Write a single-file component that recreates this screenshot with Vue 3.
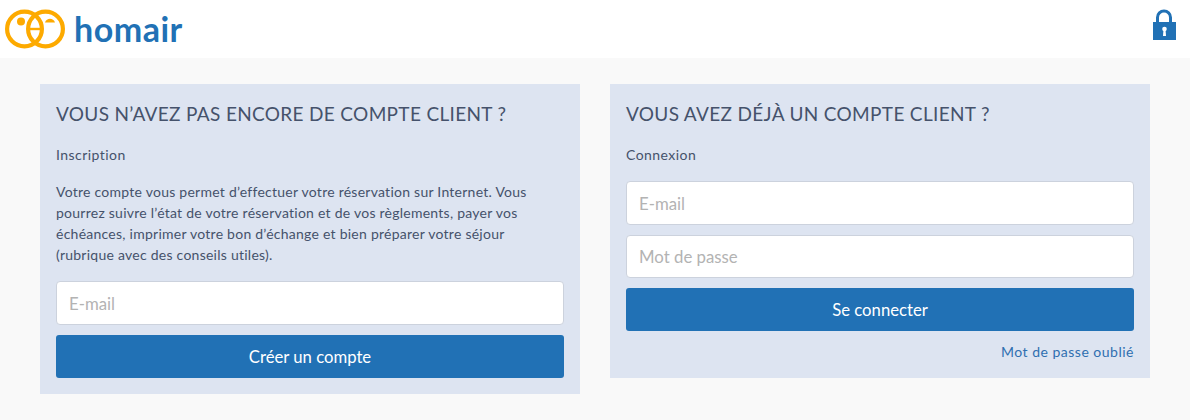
<template>
  <div class="page">
    <header class="top">
      <div class="logo">
        <svg width="60" height="40" viewBox="0 0 60 40">
          <g fill="none" stroke="#fdaa00" stroke-width="4.200">
            <circle cx="19.500" cy="20" r="17.400" />
            <circle cx="40.500" cy="20" r="17.400" />
            <path d="M23 20h14" stroke-width="2.400" />
          </g>
          <circle cx="16" cy="12.500" r="4" fill="#fdaa00" />
          <path d="M40 13.500c1.500-5 8.500-5 10 0z" fill="#fdaa00" />
        </svg>
        <span class="brand">homair</span>
      </div>
      <svg class="lock" width="24" height="32" viewBox="0 0 24 32">
        <path d="M5.500 15V9.500a6.500 6.500 0 0 1 13 0V15" fill="none" stroke="#2171b5" stroke-width="3" />
        <path d="M1 14h23v18H1z" fill="#2171b5" />
        <circle cx="12.500" cy="21" r="2.300" fill="#fff" />
        <path d="M11.500 21h2l.5 7h-3z" fill="#fff" />
      </svg>
    </header>
    <main class="cols">
      <section class="card">
        <h2>VOUS N’AVEZ PAS ENCORE DE COMPTE CLIENT ?</h2>
        <p class="sub">Inscription</p>
        <p class="desc">
          Votre compte vous permet d’effectuer votre réservation sur Internet. Vous<br />
          pourrez suivre l’état de votre réservation et de vos règlements, payer vos<br />
          échéances, imprimer votre bon d’échange et bien préparer votre séjour<br />
          (rubrique avec des conseils utiles).
        </p>
        <input type="text" placeholder="E-mail" />
        <button>Créer un compte</button>
      </section>
      <section class="card">
        <h2>VOUS AVEZ DÉJÀ UN COMPTE CLIENT ?</h2>
        <p class="sub">Connexion</p>
        <input type="text" placeholder="E-mail" />
        <input class="short" type="password" placeholder="Mot de passe" />
        <button>Se connecter</button>
        <a class="forgot" href="#">Mot de passe oublié</a>
      </section>
    </main>
  </div>
</template>

<script setup>
</script>

<style>
html,
body {
  margin: 0;
  background: #f9f9f9;
}
</style>

<style scoped>
.page {
  height: 420px;
  overflow: hidden;
  font-family: Lato, "Open Sans", sans-serif;
  color: #45526b;
}
.top {
  height: 58px;
  background: #fff;
  display: flex;
  justify-content: space-between;
  padding: 0 14px 0 5px;
}
.logo {
  display: flex;
  align-items: center;
  gap: 9px;
  height: 58px;
}
.brand {
  font-size: 34px;
  font-weight: 700;
  color: #2171b5;
  letter-spacing: 0.5px;
  line-height: 40px;
}
.lock {
  margin-top: 8px;
}
.cols {
  display: flex;
  align-items: flex-start;
  gap: 30px;
  padding: 26px 40px 0;
}
.card {
  flex: 1;
  box-sizing: border-box;
  display: flex;
  flex-direction: column;
  background: #dde4f1;
  padding: 16px 16px 0;
}
h2 {
  margin: 0;
  height: 28px;
  font-size: 19px;
  line-height: 28px;
  font-weight: 400;
  letter-spacing: 0.33px;
  white-space: nowrap;
}
.sub {
  margin: 17px 0 0;
  font-size: 14px;
  line-height: 20px;
  letter-spacing: 0.45px;
}
.desc {
  margin: 16px 0 0;
  font-size: 14px;
  line-height: 21px;
  letter-spacing: 0.25px;
  white-space: nowrap;
}
.card .sub + input {
  margin-top: 16px;
}
.desc + input {
  margin-top: 16px;
}
input {
  box-sizing: border-box;
  height: 44px;
  width: 100%;
  margin: 0 0 10px;
  padding: 0 12px;
  border: 1px solid #ccd2dd;
  border-radius: 4px;
  background: #fff;
  font-family: inherit;
  font-size: 16.800px;
  outline: none;
}
input.short {
  height: 43px;
}
input::placeholder {
  color: #b3b3b3;
}
button {
  height: 43px;
  border: none;
  border-radius: 3px;
  background: #2171b5;
  color: #fff;
  font-family: inherit;
  font-size: 16.700px;
  margin-bottom: 16px;
}
.forgot {
  align-self: flex-end;
  margin: -5px 0 16px;
  font-size: 14px;
  line-height: 20px;
  letter-spacing: 0.5px;
  color: #2f6fb0;
  text-decoration: none;
}
</style>
